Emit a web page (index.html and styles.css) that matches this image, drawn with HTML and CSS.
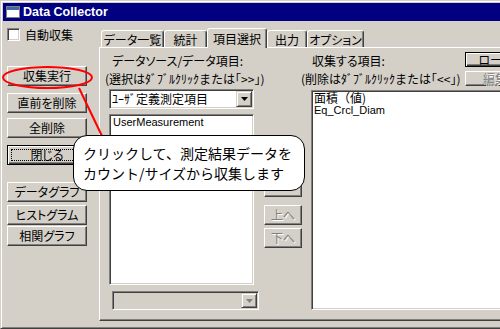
FILE: index.html
```html
<!DOCTYPE html>
<html lang="ja">
<head>
<meta charset="utf-8">
<title>Data Collector</title>
<link rel="stylesheet" href="styles.css">
</head>
<body>
<div class="window">
  <div class="titlebar">
    <svg class="app-icon" width="14" height="12" viewBox="0 0 14 12">
      <rect x="0.5" y="0.5" width="13" height="11" fill="#fff" stroke="#808080"/>
      <rect x="1" y="1" width="12" height="3" fill="#3a6ea5"/>
    </svg>
    <span class="title-text">Data Collector</span>
  </div>
  <div class="main">
    <div class="side">
      <div class="check-row"><span class="checkbox"></span><span>自動収集</span></div>
      <div class="btn side-btn b1">収集実行</div>
      <div class="btn side-btn b2">直前を削除</div>
      <div class="btn side-btn b3">全削除</div>
      <div class="btn side-btn default focus b4">閉じる</div>
      <div class="btn side-btn b5">データグラフ</div>
      <div class="btn side-btn b6">ヒストグラム</div>
      <div class="btn side-btn b7">相関グラフ</div>
    </div>
    <div class="tabarea">
      <div class="tabstrip">
        <div class="tab w1">データ一覧</div>
        <div class="tab w2">統計</div>
        <div class="tab active w3">項目選択</div>
        <div class="tab w4">出力</div>
        <div class="tab w5">オプション</div>
      </div>
      <div class="panel">
        <div class="col-left">
          <div class="lbl">データソース/データ項目:</div>
          <div class="hint">(選択はﾀﾞﾌﾞﾙｸﾘｯｸまたは｢&gt;&gt;｣)</div>
          <div class="combo">
            <span class="combo-text">ﾕｰｻﾞ定義測定項目</span>
            <span class="combo-arrow"><svg width="7" height="4" viewBox="0 0 7 4"><polygon points="0,0 7,0 3.5,4" fill="#000"/></svg></span>
          </div>
          <div class="listbox list-l"><div class="item">UserMeasurement</div></div>
          <div class="combo disabled">
            <span class="combo-text"></span>
            <span class="combo-arrow"><svg width="7" height="4" viewBox="0 0 7 4"><polygon points="0,0 7,0 3.5,4" fill="#808080"/></svg></span>
          </div>
        </div>
        <div class="col-mid">
          <div class="btn mid-btn m1">&gt;&gt;</div>
          <div class="btn mid-btn m2"></div>
          <div class="btn mid-btn disabled m3">上へ</div>
          <div class="btn mid-btn disabled m4">下へ</div>
        </div>
        <div class="col-right">
          <div class="lbl lbl-r">収集する項目:</div>
          <div class="btn small-btn default">ロード</div>
          <div class="hint">(削除はﾀﾞﾌﾞﾙｸﾘｯｸまたは｢&lt;&lt;｣)</div>
          <div class="btn small-btn disabled edit-btn">編集</div>
          <div class="listbox list-r">
            <div class="item cjk">面積（値)</div>
            <div class="item">Eq_Crcl_Diam</div>
          </div>
        </div>
      </div>
    </div>
  </div>
  <svg class="annot" width="500" height="329" viewBox="0 0 500 329">
    <ellipse cx="46.5" cy="76.5" rx="44.5" ry="10.5" fill="none" stroke="#f00" stroke-width="2"/>
    <line x1="78" y1="87" x2="101" y2="135" stroke="#f00" stroke-width="2"/>
  </svg>
  <div class="callout">クリックして、測定結果データを<br>カウント/サイズから収集します</div>
</div>
</body>
</html>
```

FILE: styles.css
```css
html, body {
  margin: 0;
  padding: 0;
  overflow: hidden;
  background: #d4d0c8;
}
body {
  width: 500px;
  height: 329px;
  font-family: "Noto Sans CJK JP", "Liberation Sans", sans-serif;
  font-size: 12px;
  color: #000;
}
.window {
  position: relative;
  box-sizing: border-box;
  width: 520px;
  height: 329px;
  background: #d4d0c8;
  border: 1px solid;
  border-color: #d4d0c8 #404040 #404040 #d4d0c8;
  box-shadow: inset 1px 1px #fff, inset -1px -1px #808080;
  padding: 2px;
  display: flex;
  flex-direction: column;
}
.titlebar {
  height: 18px;
  flex: none;
  background: #000080;
  display: flex;
  align-items: center;
  padding-left: 3px;
  gap: 3px;
  color: #fff;
  font: bold 12.5px "Liberation Sans", Arial, sans-serif;
}
.app-icon { display: block; }
.main {
  display: flex;
  height: 303px;
}
.side {
  width: 96px;
  flex: none;
  box-sizing: border-box;
  padding-left: 4px;
  display: flex;
  flex-direction: column;
}
.check-row {
  display: flex;
  align-items: center;
  gap: 5px;
  height: 13px;
  margin-top: 7px;
}
.checkbox {
  width: 13px;
  height: 13px;
  box-sizing: border-box;
  background: #fff;
  border: 1px solid;
  border-color: #808080 #fff #fff #808080;
  box-shadow: inset 1px 1px #404040, inset -1px -1px #d4d0c8;
}
.btn {
  box-sizing: border-box;
  height: 20px;
  display: flex;
  align-items: center;
  justify-content: center;
  background: #d4d0c8;
  border: 1px solid;
  border-color: #fff #404040 #404040 #fff;
  box-shadow: inset -1px -1px #808080;
  font-feature-settings: "palt";
  line-height: 1;
  white-space: nowrap;
}
.btn.default {
  border: 1px solid #000;
  box-shadow: inset 1px 1px #fff, inset -1px -1px #404040, inset -2px -2px #808080;
}
.btn.focus {
  outline: 1px dotted #000;
  outline-offset: -5px;
}
.btn.disabled {
  color: #808080;
  text-shadow: 1px 1px 0 #fff;
}
.side-btn { width: 80px; }
.b1 { margin-top: 25px; }
.b2 { margin-top: 7px; }
.b3 { margin-top: 5px; }
.b4 { margin-top: 7px; }
.b5 { margin-top: 17px; }
.b6 { margin-top: 3px; }
.b7 { margin-top: 1px; }

.tabarea {
  flex: 1;
  display: flex;
  flex-direction: column;
}
.tabstrip {
  height: 26px;
  box-sizing: border-box;
  display: flex;
  align-items: flex-end;
  padding-left: 2px;
  position: relative;
  z-index: 1;
}
.tab {
  height: 17px;
  box-sizing: border-box;
  border: 1px solid;
  border-bottom: none;
  border-color: #fff #404040 transparent #fff;
  box-shadow: inset -1px 0 #808080;
  border-radius: 3px 3px 0 0;
  display: flex;
  align-items: center;
  justify-content: center;
  font-feature-settings: "palt";
  white-space: nowrap;
  background: #d4d0c8;
}
.tab.active {
  height: 20px;
  margin-bottom: -1px;
  align-items: flex-start;
  padding-top: 1px;
}
.w1 { width: 63px; }
.w2 { width: 43px; }
.w3 { width: 60px; }
.w4 { width: 40px; }
.w5 { width: 57px; }

.panel {
  height: 274px;
  box-sizing: border-box;
  border: 1px solid;
  border-color: #fff #404040 #404040 #fff;
  box-shadow: inset -1px -1px #808080;
  display: flex;
  padding: 4px 0 0 5px;
}
.col-left {
  width: 154px;
  flex: none;
  display: flex;
  flex-direction: column;
}
.lbl {
  height: 17px;
  line-height: 17px;
  padding-left: 7px;
  font-feature-settings: "palt";
  white-space: nowrap;
}
.hint {
  height: 20px;
  line-height: 20px;
  white-space: nowrap;
}
.combo, .listbox {
  box-sizing: border-box;
  border: 1px solid;
  border-color: #808080 #fff #fff #808080;
  box-shadow: inset 1px 1px #404040, inset -1px -1px #d4d0c8;
  background: #fff;
}
.combo {
  margin-left: 4px;
  width: 145px;
  height: 20px;
  display: flex;
  align-items: center;
  padding: 1px;
}
.combo-text {
  flex: 1;
  padding-left: 1px;
  white-space: nowrap;
  line-height: 16px;
}
.combo-arrow {
  width: 16px;
  height: 16px;
  box-sizing: border-box;
  flex: none;
  display: flex;
  align-items: center;
  justify-content: center;
  background: #d4d0c8;
  border: 1px solid;
  border-color: #d4d0c8 #404040 #404040 #d4d0c8;
  box-shadow: inset 1px 1px #fff, inset -1px -1px #808080;
}
.combo-arrow svg { display: block; }
.combo.disabled {
  margin: 6px 0 0 7px;
  width: 147px;
  height: 19px;
  background: #d4d0c8;
}
.combo.disabled .combo-arrow { height: 15px; }
.listbox {
  font-family: "Liberation Sans", Arial, sans-serif;
  font-size: 11px;
  line-height: 13px;
  padding: 1px 3px;
}
.item { white-space: nowrap; }
.item.cjk { font-family: "Noto Sans CJK JP", sans-serif; font-size: 12px; }
.list-l {
  margin: 5px 0 0 4px;
  width: 145px;
  height: 171px;
}
.col-mid {
  width: 38px;
  flex: none;
  margin-left: 5px;
  display: flex;
  flex-direction: column;
}
.mid-btn { width: 38px; }
.m1 { margin-top: 95px; }
.m2 { margin-top: 10px; }
.m3 { margin-top: 8px; }
.m4 { margin-top: 3px; }
.col-right {
  flex: 1;
  margin-left: -1px;
  display: grid;
  grid-template-columns: 164px 1fr;
  grid-template-rows: 17px 20px 1fr;
  align-items: start;
}
.lbl-r { padding-left: 11px; }
.small-btn {
  width: 60px;
  height: 15px;
}
.edit-btn { margin-top: 2px; }
.list-r {
  grid-column: 1 / 3;
  margin: 1px 0 0 10px;
  height: 220px;
  padding: 0 3px 0 2px;
}
.annot {
  position: absolute;
  left: 0;
  top: 0;
  z-index: 5;
  pointer-events: none;
}
.callout {
  position: absolute;
  left: 72px;
  top: 134px;
  width: 232px;
  height: 56px;
  box-sizing: border-box;
  background: #fff;
  border: 1px solid #000;
  border-radius: 14px;
  padding: 7px 0 0 9px;
  font-size: 14px;
  line-height: 20px;
  white-space: nowrap;
  z-index: 6;
}
```
